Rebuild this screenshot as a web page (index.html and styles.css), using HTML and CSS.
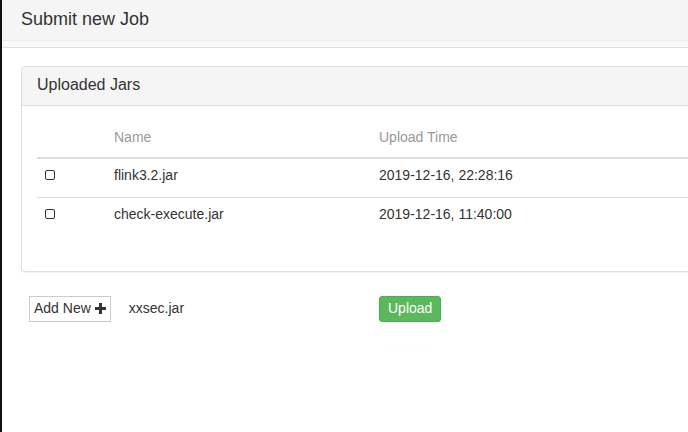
FILE: index.html
```html
<!DOCTYPE html>
<html lang="en">
<head>
  <meta charset="UTF-8">
  <title>Submit new Job</title>
  <link rel="stylesheet" href="styles.css">
</head>
<body>

<div class="page">
  <div class="topbar">Submit new Job</div>

  <div class="content">
    <div class="panel">
      <div class="panel-heading">Uploaded Jars</div>
      <div class="panel-body">
        <table class="jars">
          <thead>
            <tr>
              <th class="col-check"></th>
              <th class="col-name">Name</th>
              <th>Upload Time</th>
            </tr>
          </thead>
          <tbody>
            <tr>
              <td><span class="check"></span></td>
              <td>flink3.2.jar</td>
              <td>2019-12-16, 22:28:16</td>
            </tr>
            <tr>
              <td><span class="check"></span></td>
              <td>check-execute.jar</td>
              <td>2019-12-16, 11:40:00</td>
            </tr>
          </tbody>
        </table>
      </div>
    </div>

    <div class="upload-row">
      <div class="file-pick">
        <button class="btn-add">Add New
          <svg width="11" height="11" viewBox="0 0 11 11"><path d="M4 0h3v4h4v3H7v4H4V7H0V4h4z" fill="#333"/></svg>
        </button>
        <span class="file-name">xxsec.jar</span>
      </div>
      <button class="btn-upload">Upload</button>
    </div>
  </div>
</div>

</body>
</html>
```

FILE: styles.css
```css
html, body {
  margin: 0;
  overflow: hidden;
}
body {
  font-family: "Liberation Sans", Arial, sans-serif;
  font-size: 14px;
  color: #333;
  background: #fff;
}
.page {
  border-left: 2px solid #111;
  height: 432px;
}
.topbar {
  height: 41px;
  line-height: 38px;
  padding-left: 19px;
  font-size: 18px;
  background: #f5f5f5;
  border-bottom: 1px solid #ddd;
  box-shadow: inset 0 -6px 0 #f9f9f9, inset 0 -7px 0 #ebebeb;
  padding-bottom: 6px;
}
.content {
  padding: 18px 0 0 19px;
}
.panel {
  width: 720px;
  border: 1px solid #ddd;
  border-radius: 4px;
  box-shadow: 0 1px 1px rgba(0, 0, 0, 0.05);
}
.panel-heading {
  height: 38px;
  line-height: 36px;
  padding-left: 15px;
  font-size: 16px;
  background: #f5f5f5;
  border-bottom: 1px solid #ddd;
  border-radius: 3px 3px 0 0;
}
.panel-body {
  padding: 15px 0 15px 15px;
}
.jars {
  width: 100%;
  border-collapse: collapse;
  margin-bottom: 20px;
}
.jars th {
  text-align: left;
  font-weight: normal;
  color: #999;
  padding: 6px 8px 10px;
  line-height: 20px;
  border-bottom: 2px solid #ddd;
}
.jars td {
  padding: 6px 8px 12px;
  line-height: 20px;
  border-top: 1px solid #ddd;
}
.col-check {
  width: 53px;
}
.col-name {
  width: 249px;
}
.check {
  display: inline-block;
  width: 8px;
  height: 8px;
  border: 1px solid #333;
  border-radius: 2px;
  vertical-align: 0;
}
.upload-row {
  display: flex;
  align-items: center;
  margin-top: 24px;
  padding-left: 8px;
}
.file-pick {
  width: 350px;
  display: flex;
  align-items: center;
}
.btn-add {
  font-family: inherit;
  font-size: 14px;
  color: #333;
  background: #fff;
  border: 1px solid #ccc;
  height: 26px;
  padding: 0 4px 2px;
  display: flex;
  align-items: center;
  gap: 4px;
}
.file-name {
  margin-left: 18px;
  padding-bottom: 2px;
}
.btn-upload {
  font-family: inherit;
  font-size: 14px;
  color: #fff;
  background: #5cb85c;
  border: 1px solid #4cae4c;
  border-radius: 3px;
  height: 26px;
  padding: 0 8px 2px;
}
```
